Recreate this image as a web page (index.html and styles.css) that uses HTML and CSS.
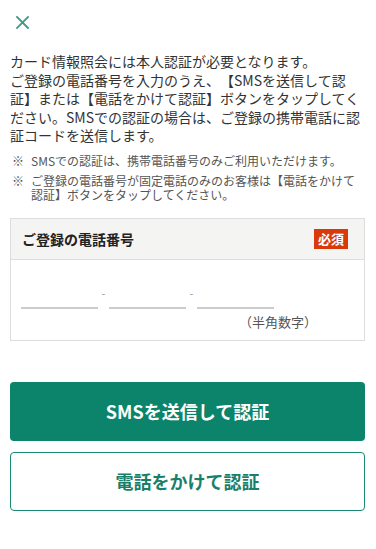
FILE: index.html
```html
<!DOCTYPE html>
<html lang="ja">
<head>
<meta charset="utf-8">
<title>本人認証</title>
<link rel="stylesheet" href="styles.css">
</head>
<body>
<div class="page">
  <div class="topbar">
    <svg class="close" width="13" height="13" viewBox="0 0 13 13" aria-label="閉じる">
      <path d="M1 1 L12 12 M12 1 L1 12" stroke="#3f9c82" stroke-width="1.8" fill="none" stroke-linecap="square"/>
    </svg>
  </div>
  <p class="lead">カード情報照会には本人認証が必要となります。<br>ご登録の電話番号を入力のうえ、【SMSを送信して認証】または【電話をかけて認証】ボタンをタップしてください。SMSでの認証の場合は、ご登録の携帯電話に認証コードを送信します。</p>
  <ul class="notes">
    <li><span class="mark">※</span><span>SMSでの認証は、携帯電話番号のみご利用いただけます。</span></li>
    <li><span class="mark">※</span><span>ご登録の電話番号が固定電話のみのお客様は【電話をかけて認証】ボタンをタップしてください。</span></li>
  </ul>
  <div class="field">
    <div class="field-head">
      <span class="field-title">ご登録の電話番号</span>
      <span class="badge">必須</span>
    </div>
    <div class="field-body">
      <div class="tel-row">
        <input class="tel" type="tel" inputmode="numeric">
        <span class="dash">-</span>
        <input class="tel" type="tel" inputmode="numeric">
        <span class="dash">-</span>
        <input class="tel" type="tel" inputmode="numeric">
      </div>
      <div class="hint">（半角数字）</div>
    </div>
  </div>
  <div class="actions">
    <button class="btn btn-primary" type="button">SMSを送信して認証</button>
    <button class="btn btn-outline" type="button">電話をかけて認証</button>
  </div>
</div>
</body>
</html>
```
FILE: styles.css
```css
* { box-sizing: border-box; }
html, body {
  margin: 0;
  padding: 0;
  background: #ffffff;
}
body {
  font-family: "Noto Sans CJK JP", "Noto Sans", sans-serif;
  color: #333333;
  text-spacing-trim: space-all;
}
.page {
  padding: 0 11px 0 10px;
}
.topbar {
  height: 45px;
  display: flex;
  align-items: center;
  padding-left: 6px;
}
.close { display: block; }
.lead {
  margin: 7px 0 0;
  font-size: 14px;
  line-height: 18.5px;
  color: #333333;
  text-spacing-trim: space-all;
}
.notes {
  list-style: none;
  margin: 9px 0 0;
  padding: 0;
  font-size: 12px;
  line-height: 14.4px;
  color: #555555;
  text-spacing-trim: space-all;
}
.notes li {
  display: flex;
  margin-bottom: 6px;
}
.notes .mark {
  flex: 0 0 21px;
  padding-left: 2px;
}
.field {
  margin-top: 15px;
  border: 1px solid #dddddd;
}
.field-head {
  height: 41px;
  background: #f4f4f3;
  border-bottom: 1px solid #dddddd;
  display: flex;
  align-items: center;
  justify-content: space-between;
  padding: 0 16px 0 11px;
}
.field-title {
  font-size: 14px;
  font-weight: 700;
  color: #222222;
}
.badge {
  background: #d83a0c;
  color: #ffffff;
  font-size: 13px;
  font-weight: 700;
  line-height: 20px;
  height: 20px;
  padding: 0 4px;
}
.field-body {
  padding: 20px 10px 10px;
}
.tel-row {
  display: flex;
  align-items: center;
}
.tel {
  width: 77px;
  height: 29px;
  border: 0;
  border-bottom: 2px solid #cccccc;
  background: transparent;
  padding: 0;
  font-family: inherit;
  font-size: 14px;
  outline: none;
}
.dash {
  width: 11px;
  text-align: center;
  font-size: 10px;
  color: #888888;
  line-height: 10px;
  margin-top: -3px;
}
.hint {
  margin: 5px 0 0 218px;
  font-size: 13px;
  line-height: 16px;
  color: #555555;
}
.actions {
  margin-top: 41px;
  display: flex;
  flex-direction: column;
  gap: 11px;
}
.btn {
  display: block;
  width: 100%;
  height: 59px;
  border-radius: 4px;
  font-family: inherit;
  font-size: 18px;
  font-weight: 700;
  cursor: pointer;
}
.btn-primary {
  background: #0c846b;
  color: #ffffff;
  border: 0;
}
.btn-outline {
  background: #ffffff;
  color: #1a7f6a;
  border: 1px solid #1a8a72;
}
```
